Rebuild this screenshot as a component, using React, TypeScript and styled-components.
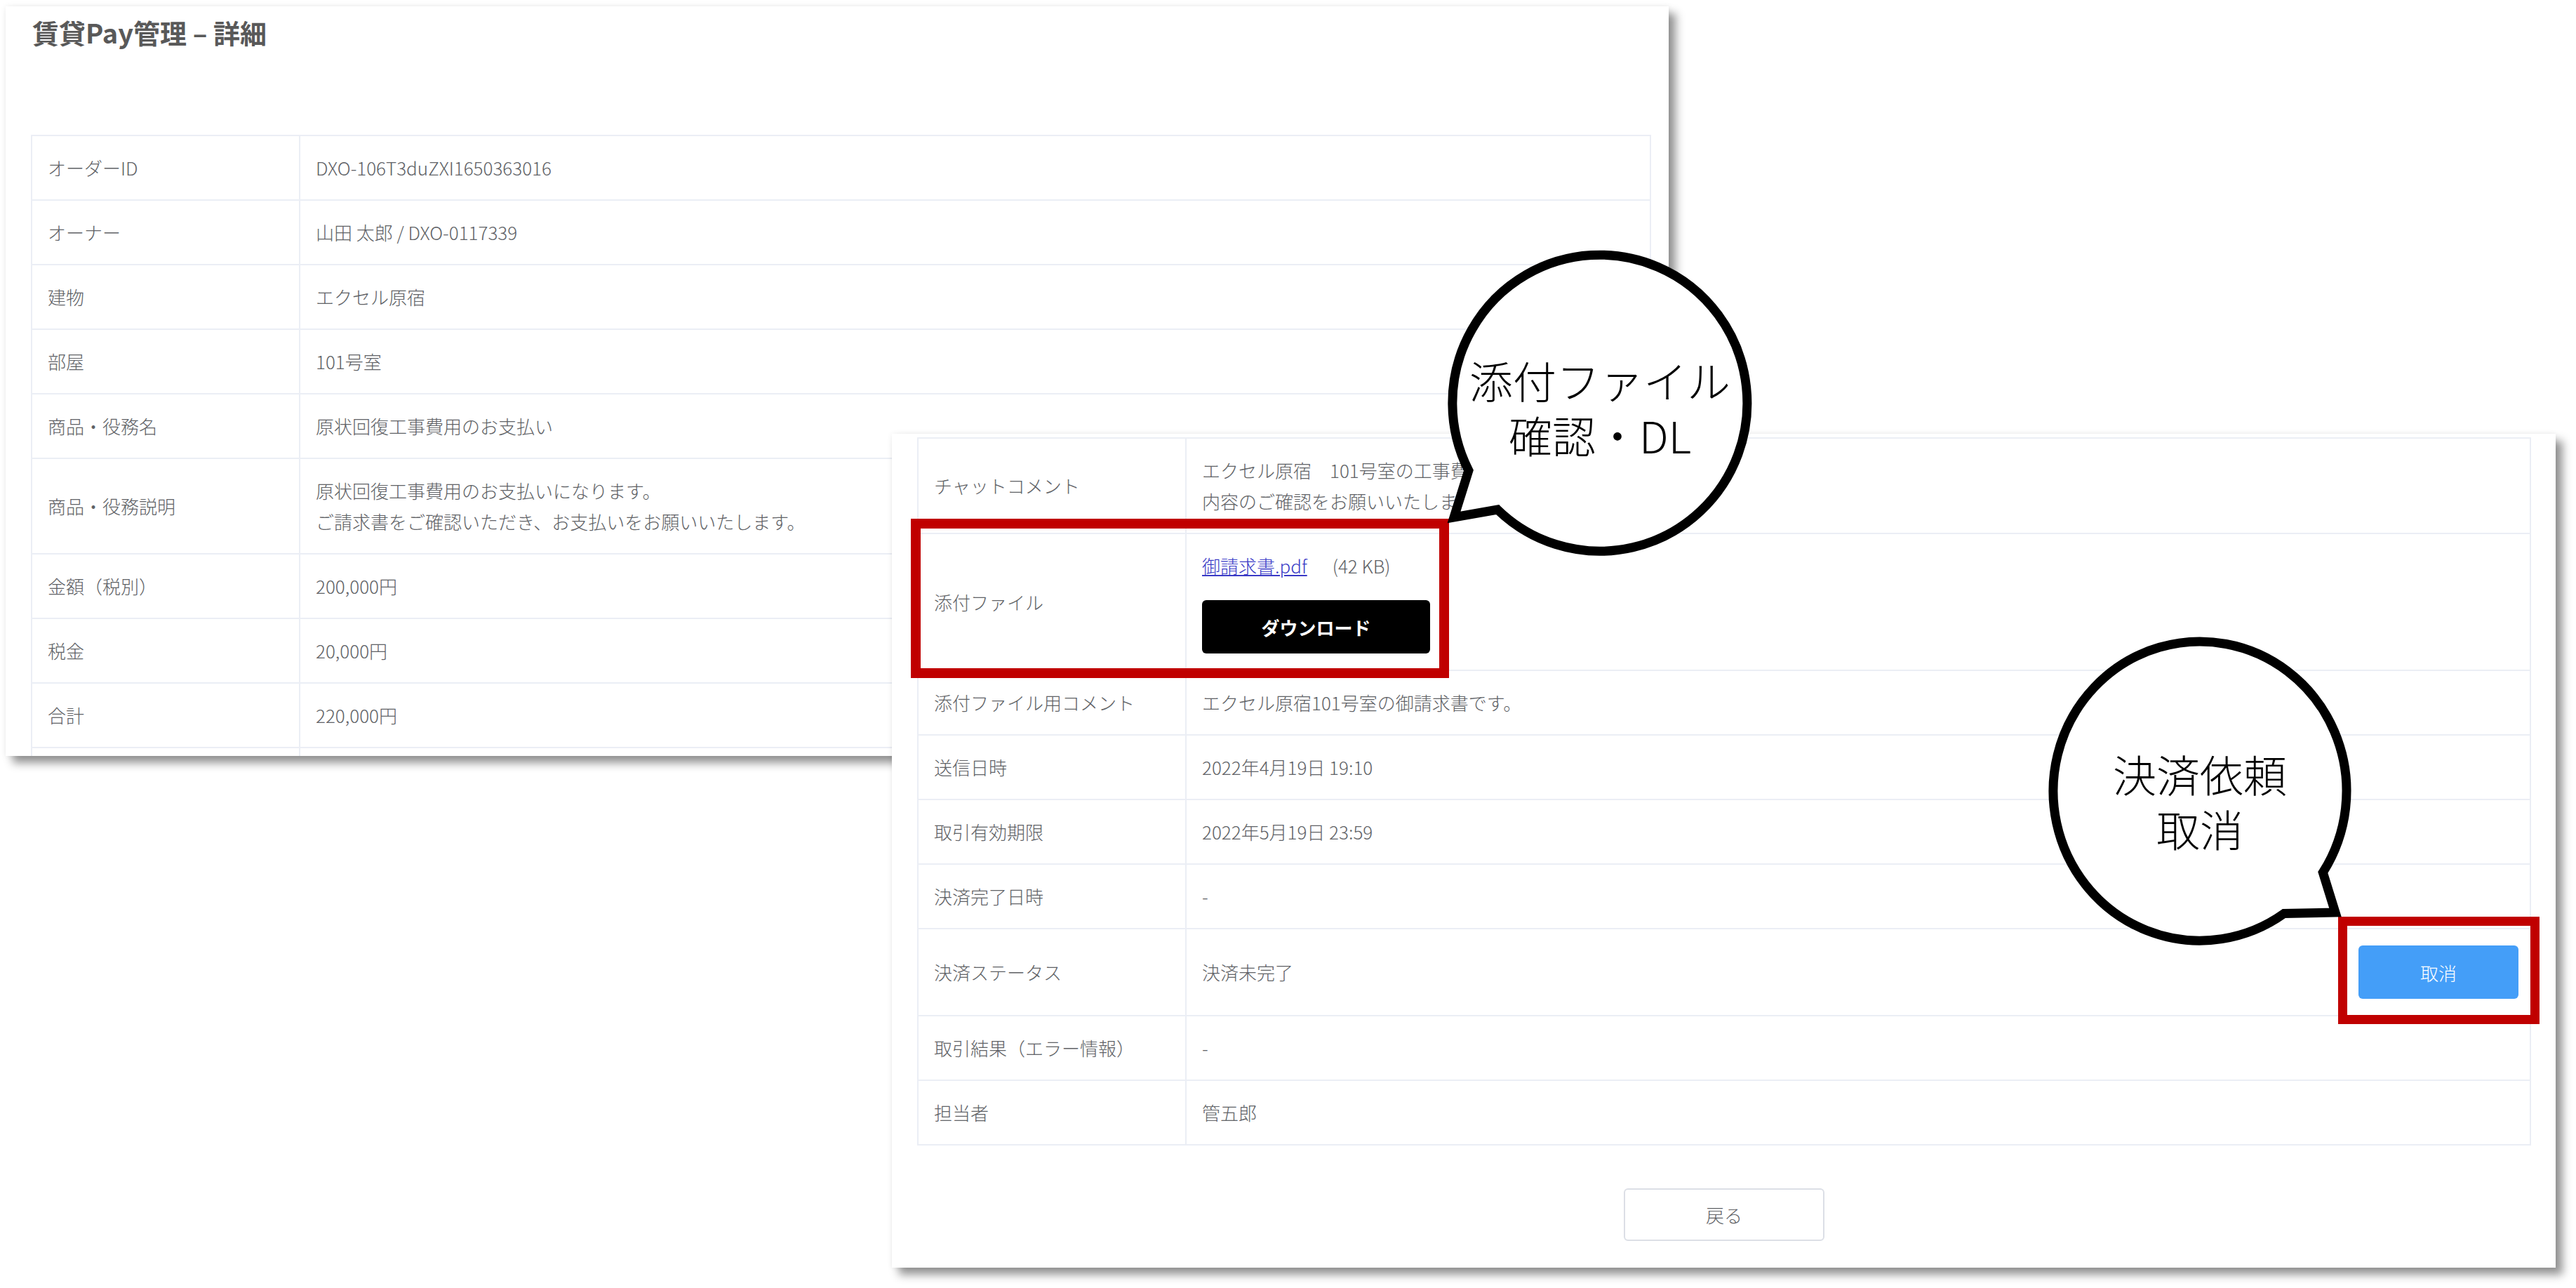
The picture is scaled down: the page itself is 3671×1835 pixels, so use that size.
import React from "react";
import styled, { createGlobalStyle } from "styled-components";

const GlobalStyle = createGlobalStyle`
  html, body {
    margin: 0;
    padding: 0;
    background: #fff;
  }
  body {
    font-family: "Noto Sans CJK JP", "Noto Sans", sans-serif;
  }
  * {
    box-sizing: border-box;
  }
`;

type Field = [string, string];

const orderFields: Field[] = [
  ["オーダーID", "DXO-106T3duZXI1650363016"],
  ["オーナー", "山田 太郎 / DXO-0117339"],
  ["建物", "エクセル原宿"],
  ["部屋", "101号室"],
  ["商品・役務名", "原状回復工事費用のお支払い"],
  [
    "商品・役務説明",
    "原状回復工事費用のお支払いになります。\nご請求書をご確認いただき、お支払いをお願いいたします。",
  ],
  ["金額（税別）", "200,000円"],
  ["税金", "20,000円"],
  ["合計", "220,000円"],
];

const historyFields: Field[] = [
  ["送信日時", "2022年4月19日 19:10"],
  ["取引有効期限", "2022年5月19日 23:59"],
  ["決済完了日時", "-"],
];

export default function App() {
  return (
    <>
      <GlobalStyle />
      <Canvas>
        {/* 一覧から開いた詳細画面 */}
        <Sheet $left={8} $top={9} $width={2370} $height={1068} $pad="12px 25px 0 36px">
          <PageTitle>賃貸Pay管理 – 詳細</PageTitle>
          <DetailTable>
            {orderFields.map(([label, value]) => (
              <Row key={label}>
                <Label>{label}</Label>
                <Value>{value}</Value>
              </Row>
            ))}
            {/* 画面外に続く行 */}
            <Row>
              <Label />
              <Value />
            </Row>
          </DetailTable>
        </Sheet>

        {/* 同じ画面の下半分 */}
        <Sheet $left={1271} $top={618} $width={2371} $height={1188} $pad="5px 35px 38px 36px">
          <DetailTable>
            <Row>
              <Label>チャットコメント</Label>
              <Value>
                {"エクセル原宿　101号室の工事費用のお見積もりです。\n内容のご確認をお願いいたします。"}
              </Value>
            </Row>
            <Row>
              <Label>添付ファイル</Label>
              <Value>
                <FileLine>
                  <FileLink href="#">御請求書.pdf</FileLink>
                  <FileSize>(42 KB)</FileSize>
                </FileLine>
                <DownloadButton>ダウンロード</DownloadButton>
              </Value>
            </Row>
            <Row>
              <Label>添付ファイル用コメント</Label>
              <Value>エクセル原宿101号室の御請求書です。</Value>
            </Row>
            {historyFields.map(([label, value]) => (
              <Row key={label}>
                <Label>{label}</Label>
                <Value>{value}</Value>
              </Row>
            ))}
            <Row>
              <Label>決済ステータス</Label>
              <Value $split>
                <span>決済未完了</span>
                <CancelButton>取消</CancelButton>
              </Value>
            </Row>
            <Row>
              <Label>取引結果（エラー情報）</Label>
              <Value>-</Value>
            </Row>
            <Row>
              <Label>担当者</Label>
              <Value>管五郎</Value>
            </Row>
          </DetailTable>
          <Footer>
            <BackButton>戻る</BackButton>
          </Footer>
        </Sheet>

        <Highlight $left={1298} $top={739} $width={767} $height={227} $line={14} />
        <Highlight $left={3332} $top={1306} $width={287} $height={153} $line={13} />

        <Callout $left={2050} $top={345}>
          <svg viewBox="0 0 460 460" width="460" height="460">
            <path
              d="M 42.9 325.3 A 210 211 0 1 1 84.1 381.1 L 22 392 Z"
              fill="#fff"
              stroke="#000"
              strokeWidth="13"
              strokeLinejoin="miter"
            />
          </svg>
          <CalloutText $drop={10}>
            <span>添付ファイル</span>
            <span>確認・DL</span>
          </CalloutText>
        </Callout>

        <Callout $left={2905} $top={897}>
          <svg viewBox="0 0 460 460" width="460" height="460">
            <path
              d="M 349.9 404.5 A 209 213 0 1 1 405.3 346 L 423 403 Z"
              fill="#fff"
              stroke="#000"
              strokeWidth="13"
              strokeLinejoin="miter"
            />
          </svg>
          <CalloutText $drop={28}>
            <span>決済依頼</span>
            <span>取消</span>
          </CalloutText>
        </Callout>
      </Canvas>
    </>
  );
}

const Canvas = styled.div`
  position: relative;
  width: 3671px;
  height: 1835px;
  overflow: hidden;
  background: #fff;
`;

const Sheet = styled.section<{
  $left: number;
  $top: number;
  $width: number;
  $height: number;
  $pad: string;
}>`
  position: absolute;
  left: ${(p) => p.$left}px;
  top: ${(p) => p.$top}px;
  width: ${(p) => p.$width}px;
  height: ${(p) => p.$height}px;
  padding: ${(p) => p.$pad};
  display: flex;
  flex-direction: column;
  overflow: hidden;
  background: #fff;
  box-shadow: 0 0 8px rgba(0, 0, 0, 0.07), 10px 10px 12px rgba(0, 0, 0, 0.42);
`;

const PageTitle = styled.h1`
  margin: 0 0 121px 2px;
  font-size: 38px;
  line-height: 50px;
  font-weight: 700;
  color: #595959;
`;

const DetailTable = styled.div`
  display: flex;
  flex-direction: column;
  flex-shrink: 0;
  border: 2px solid #ebeef5;
  border-bottom: none;
  font-size: 26px;
  line-height: 44px;
  font-weight: 300;
  color: #606266;
`;

const Row = styled.div`
  display: grid;
  grid-template-columns: 382px 1fr;
  min-height: 92px;
  border-bottom: 2px solid #ebeef5;
`;

const Label = styled.div`
  display: flex;
  align-items: center;
  padding: 23px 22px;
  border-right: 2px solid #ebeef5;
  white-space: nowrap;
`;

const Value = styled.div<{ $split?: boolean }>`
  display: flex;
  flex-direction: ${(p) => (p.$split ? "row" : "column")};
  justify-content: ${(p) => (p.$split ? "space-between" : "center")};
  align-items: ${(p) => (p.$split ? "center" : "flex-start")};
  padding: ${(p) => (p.$split ? "23px 16px 23px 22px" : "23px 22px")};
  white-space: pre-line;
`;

const FileLine = styled.div`
  display: flex;
  align-items: center;
`;

const FileLink = styled.a`
  color: #3a3ac6;
  text-decoration: underline;
`;

const FileSize = styled.span`
  margin-left: 36px;
  color: #606266;
`;

const BaseButton = styled.button`
  display: inline-flex;
  align-items: center;
  justify-content: center;
  height: 76px;
  padding: 0;
  border-radius: 6px;
  font-family: inherit;
  font-size: 26px;
  cursor: pointer;
`;

const DownloadButton = styled(BaseButton)`
  width: 325px;
  margin-top: 27px;
  border: none;
  background: #000;
  color: #fff;
  font-weight: 700;
`;

const CancelButton = styled(BaseButton)`
  width: 228px;
  border: none;
  background: #449ef8;
  color: #fff;
  font-weight: 300;
`;

const BackButton = styled(BaseButton)`
  width: 286px;
  height: 75px;
  border: 2px solid #dcdfe6;
  background: #fff;
  color: #606266;
  font-weight: 300;
`;

const Footer = styled.div`
  display: flex;
  justify-content: center;
  margin-top: 61px;
`;

const Highlight = styled.div<{
  $left: number;
  $top: number;
  $width: number;
  $height: number;
  $line: number;
}>`
  position: absolute;
  left: ${(p) => p.$left}px;
  top: ${(p) => p.$top}px;
  width: ${(p) => p.$width}px;
  height: ${(p) => p.$height}px;
  border: ${(p) => p.$line}px solid #c00000;
`;

const Callout = styled.div<{ $left: number; $top: number }>`
  position: absolute;
  left: ${(p) => p.$left}px;
  top: ${(p) => p.$top}px;
  width: 460px;
  height: 460px;

  svg {
    position: absolute;
    inset: 0;
    overflow: visible;
  }
`;

const CalloutText = styled.div<{ $drop: number }>`
  position: relative;
  height: 100%;
  display: flex;
  flex-direction: column;
  align-items: center;
  justify-content: center;
  padding-top: ${(p) => p.$drop}px;
  font-family: "Noto Sans CJK JP", "Noto Sans", sans-serif;
  font-size: 62px;
  line-height: 78px;
  font-weight: 300;
  color: #000;
  white-space: nowrap;
`;
